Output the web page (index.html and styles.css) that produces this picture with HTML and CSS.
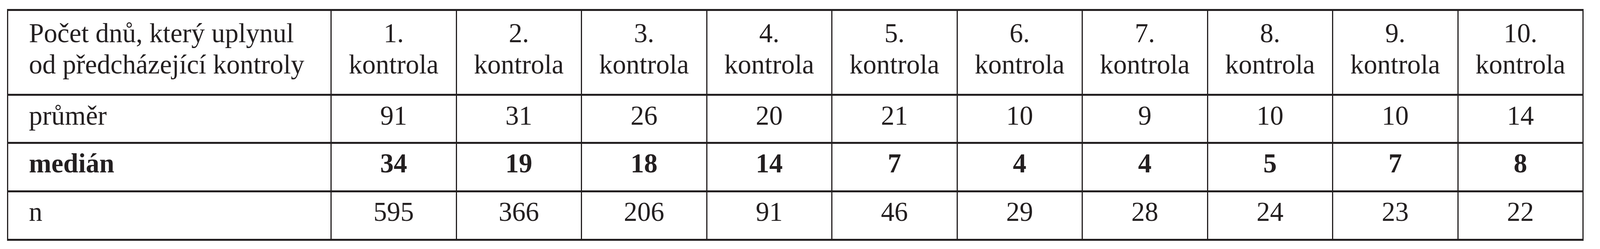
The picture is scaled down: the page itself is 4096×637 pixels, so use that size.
FILE: index.html
```html
<!DOCTYPE html>
<html lang="cs">
<head>
<meta charset="utf-8">
<title>Tabulka kontrol</title>
<link rel="stylesheet" href="styles.css">
</head>
<body>
<table class="stats">
  <colgroup>
    <col class="c-label">
    <col><col><col><col><col><col><col><col><col><col>
  </colgroup>
  <tbody>
    <tr class="head">
      <td class="label">Počet dnů, který uplynul<br>od předcházející kontroly</td>
      <td>1.<br>kontrola</td>
      <td>2.<br>kontrola</td>
      <td>3.<br>kontrola</td>
      <td>4.<br>kontrola</td>
      <td>5.<br>kontrola</td>
      <td>6.<br>kontrola</td>
      <td>7.<br>kontrola</td>
      <td>8.<br>kontrola</td>
      <td>9.<br>kontrola</td>
      <td>10.<br>kontrola</td>
    </tr>
    <tr class="row r-mean">
      <td class="label">průměr</td>
      <td>91</td><td>31</td><td>26</td><td>20</td><td>21</td><td>10</td><td>9</td><td>10</td><td>10</td><td>14</td>
    </tr>
    <tr class="row r-median">
      <td class="label">medián</td>
      <td>34</td><td>19</td><td>18</td><td>14</td><td>7</td><td>4</td><td>4</td><td>5</td><td>7</td><td>8</td>
    </tr>
    <tr class="row r-n">
      <td class="label">n</td>
      <td>595</td><td>366</td><td>206</td><td>91</td><td>46</td><td>29</td><td>28</td><td>24</td><td>23</td><td>22</td>
    </tr>
  </tbody>
</table>
</body>
</html>
```
FILE: styles.css
```css
html, body {
  margin: 0;
  padding: 0;
  background: #ffffff;
}

body {
  width: 4096px;
  height: 637px;
  overflow: hidden;
  font-family: "Liberation Serif", "Times New Roman", serif;
  color: #231f20;
}

.stats {
  margin: 23px 0 0 18px;
  width: 4036px;
  table-layout: fixed;
  border-collapse: separate;
  border-spacing: 0;
  border-top: 5px solid #231f20;
  border-left: 3px solid #231f20;
}

.c-label {
  width: 828px;
}

.stats td {
  box-sizing: border-box;
  border-right: 3px solid #231f20;
  border-bottom: 5px solid #231f20;
  padding: 0 0 17px 0;
  text-align: center;
  vertical-align: middle;
  font-size: 69px;
  line-height: 79.5px;
  white-space: nowrap;
}

.stats td.label {
  text-align: left;
  padding-left: 53px;
}

.head td {
  height: 217px;
}

.r-mean td {
  height: 123px;
  padding-bottom: 14px;
}

.r-median td,
.r-n td {
  height: 124px;
}

.r-median td {
  font-weight: bold;
}
```
